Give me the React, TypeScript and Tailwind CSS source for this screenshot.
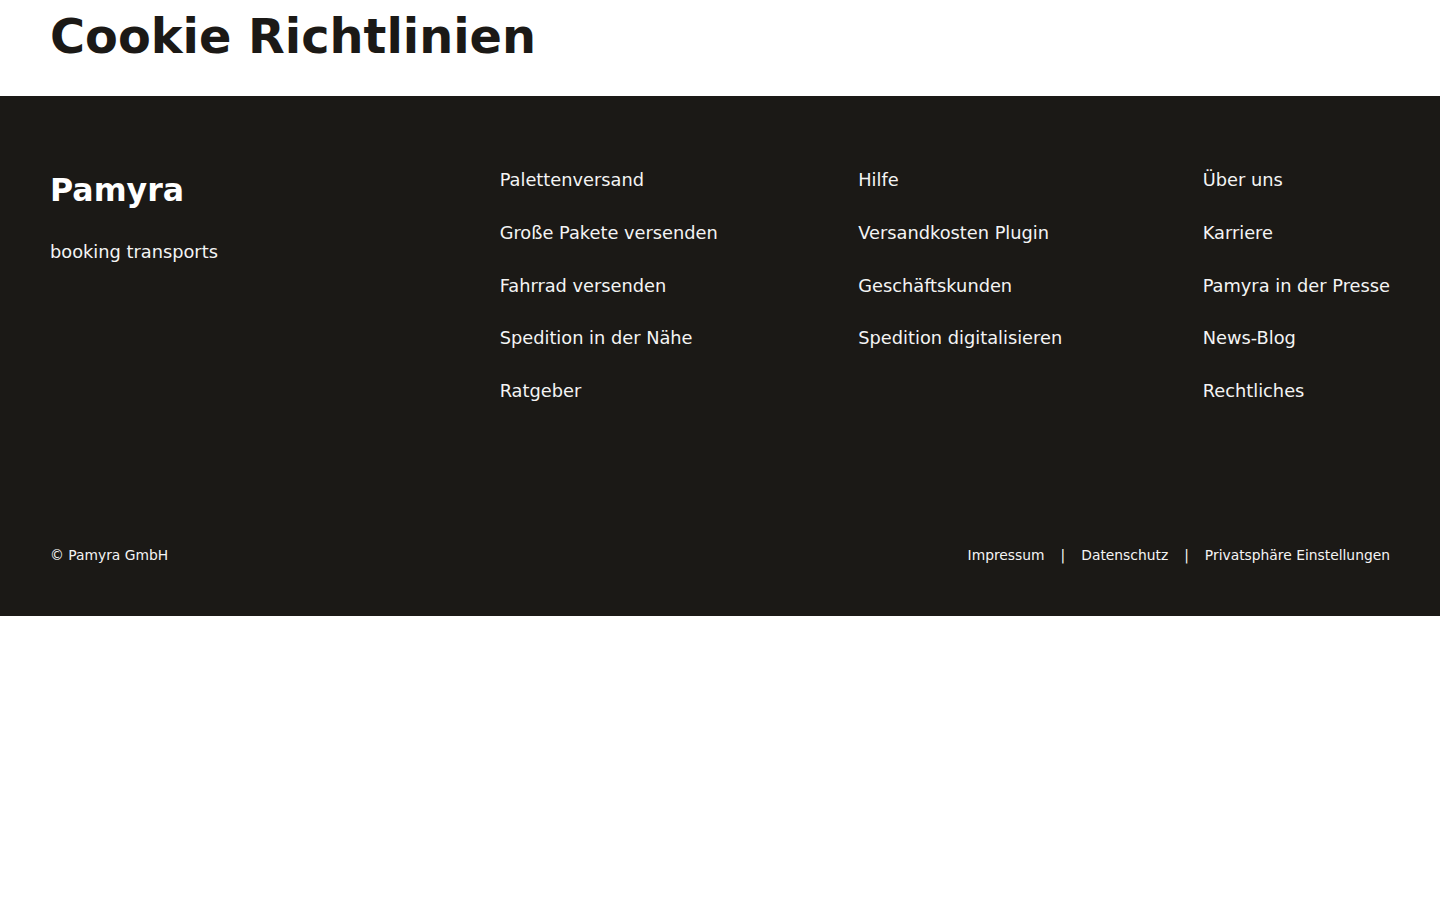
const columns: string[][] = [
  ["Palettenversand", "Große Pakete versenden", "Fahrrad versenden", "Spedition in der Nähe", "Ratgeber"],
  ["Hilfe", "Versandkosten Plugin", "Geschäftskunden", "Spedition digitalisieren"],
  ["Über uns", "Karriere", "Pamyra in der Presse", "News-Blog", "Rechtliches"],
];

export default function App() {
  return (
    <div className="min-h-screen bg-white font-['DejaVu_Sans',sans-serif] text-[#1b1916]">
      <header className="h-[96px] px-[50px] pt-[8px]">
        <h1 className="text-[47.8px] font-bold leading-[1.2]">Cookie Richtlinien</h1>
      </header>

      <footer className="bg-[#1b1916] px-[50px] pt-[70px] pb-[50px] text-[#f4f4f4]">
        <div className="flex justify-between">
          <div>
            <div className="text-[31.6px] font-bold leading-[48px] text-white">Pamyra</div>
            <p className="mt-6 text-[17.8px] leading-[27px]">booking transports</p>
          </div>
          <div className="flex gap-[140.5px]">
            {columns.map((col, i) => (
              <ul key={i} className="flex flex-col gap-[25.75px] text-[17.8px] leading-[27px]">
                {col.map((item) => (
                  <li key={item}>
                    <a href="#">{item}</a>
                  </li>
                ))}
              </ul>
            ))}
          </div>
        </div>

        <div className="mt-[141px] flex items-center justify-between text-[13.85px] leading-[21px]">
          <span>© Pamyra GmbH</span>
          <div className="flex gap-4">
            <a href="#">Impressum</a>
            <span>|</span>
            <a href="#">Datenschutz</a>
            <span>|</span>
            <a href="#">Privatsphäre Einstellungen</a>
          </div>
        </div>
      </footer>
    </div>
  );
}
